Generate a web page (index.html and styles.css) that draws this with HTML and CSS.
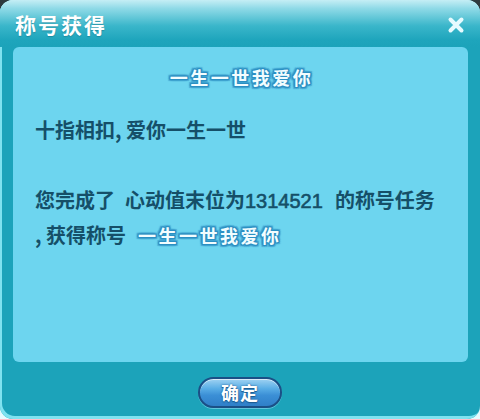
FILE: index.html
```html
<!DOCTYPE html>
<html lang="zh-CN">
<head>
<meta charset="utf-8">
<title>称号获得</title>
<link rel="stylesheet" href="styles.css">
</head>
<body>
<div class="window">
  <div class="header">
    <div class="title">称号获得</div>
    <div class="close" aria-label="关闭">
      <svg width="18" height="18" viewBox="0 0 18 18"><path d="M3.5 3.5 L14.5 14.5 M14.5 3.5 L3.5 14.5" stroke="#e6fbff" stroke-width="4" stroke-linecap="round" fill="none"/></svg>
    </div>
  </div>
  <div class="panel">
    <div class="subtitle glow">一生一世我爱你</div>
    <div class="line line1">十指相扣, 爱你一生一世</div>
    <div class="line line2">您完成了<span class="gap"></span>心动值末位为<span class="num">1314521</span><span class="gap2"></span>的称号任务</div>
    <div class="line">, 获得称号<span class="gap3"></span><span class="glow">一生一世我爱你</span></div>
  </div>
  <div class="footer">
    <div class="btn">确定</div>
  </div>
</div>
</body>
</html>
```
FILE: styles.css
```css
html, body {
  margin: 0;
  padding: 0;
}
body {
  width: 480px;
  height: 419px;
  overflow: hidden;
  background: linear-gradient(to bottom, #2e3a3e 0%, #3a4a50 40%, #cfeff5 90%, #e8fbff 100%);
  font-family: "Noto Sans CJK SC", "Liberation Sans", sans-serif;
}
.window {
  width: 480px;
  height: 419px;
  box-sizing: border-box;
  border-radius: 13px;
  background: #1ca3ba;
  box-shadow: inset 2px -3px 0 #7fe2f0, inset 0 2px 0 #c8f0f6;
  display: flex;
  flex-direction: column;
}
.header {
  height: 47px;
  border-radius: 13px 13px 0 0;
  background: linear-gradient(to bottom, #c5eef5 0%, #8fdae7 18%, #3ab6ca 55%, #1ea5bc 85%, #1ca3ba 100%);
  display: flex;
  align-items: center;
  justify-content: space-between;
  padding: 0 15px 0 15px;
  box-sizing: border-box;
}
.title {
  color: #ffffff;
  font-size: 21px;
  font-weight: bold;
  letter-spacing: 2px;
  line-height: 26px;
  margin-top: 1px;
  text-shadow: 0 1px 1px rgba(20, 110, 130, 0.5);
}
.close {
  width: 18px;
  height: 18px;
  margin-top: 2px;
}
.close svg {
  display: block;
}
.panel {
  height: 315px;
  margin: 0 12px 0 13px;
  background: #6dd5ef;
  border-radius: 6px;
  box-sizing: border-box;
  padding: 16px 10px 0 22px;
  color: #154f68;
  font-size: 20px;
  font-weight: bold;
}
.subtitle {
  text-align: center;
  line-height: 28px;
  margin-left: -10px;
}
.glow {
  color: #f2fdff;
  font-size: 18px;
  letter-spacing: 2.5px;
  text-shadow:
    1px 0 0 #2b90c3, -1px 0 0 #2b90c3, 0 1px 0 #2b90c3, 0 -1px 0 #2b90c3,
    1px 1px 0 #2b90c3, -1px -1px 0 #2b90c3, 1px -1px 0 #2b90c3, -1px 1px 0 #2b90c3,
    2px 0 1px #3ea2cf, -2px 0 1px #3ea2cf, 0 2px 1px #3ea2cf, 0 -2px 1px #3ea2cf,
    2px 2px 1px #4aaad4, -2px -2px 1px #4aaad4, 2px -2px 1px #4aaad4, -2px 2px 1px #4aaad4;
}
.line {
  line-height: 34px;
  white-space: nowrap;
}
.line1 {
  margin-top: 22px;
}
.line2 {
  margin-top: 36px;
}
.gap {
  display: inline-block;
  width: 10px;
}
.gap2 {
  display: inline-block;
  width: 12px;
}
.gap3 {
  display: inline-block;
  width: 12px;
}
.num {
  font-family: "Liberation Sans", sans-serif;
  font-weight: normal;
  -webkit-text-stroke: 0.6px #154f68;
}
.footer {
  flex: 1;
  display: flex;
  justify-content: center;
  padding-top: 15px;
  box-sizing: border-box;
}
.btn {
  width: 84px;
  height: 31px;
  box-sizing: border-box;
  border-radius: 16px;
  border: 2px solid #1b4f86;
  background: linear-gradient(to bottom, #9fd2f2 0%, #5aaee6 35%, #3b8fd6 60%, #2f7fc8 100%);
  box-shadow: inset 0 1px 0 rgba(255,255,255,0.6), 0 1px 0 #5fc5dc;
  color: #ffffff;
  font-size: 18px;
  font-weight: bold;
  line-height: 27px;
  text-align: center;
  letter-spacing: 1px;
  text-shadow: 0 0 2px #1b5a90, 0 1px 1px #1b5a90;
}
```
